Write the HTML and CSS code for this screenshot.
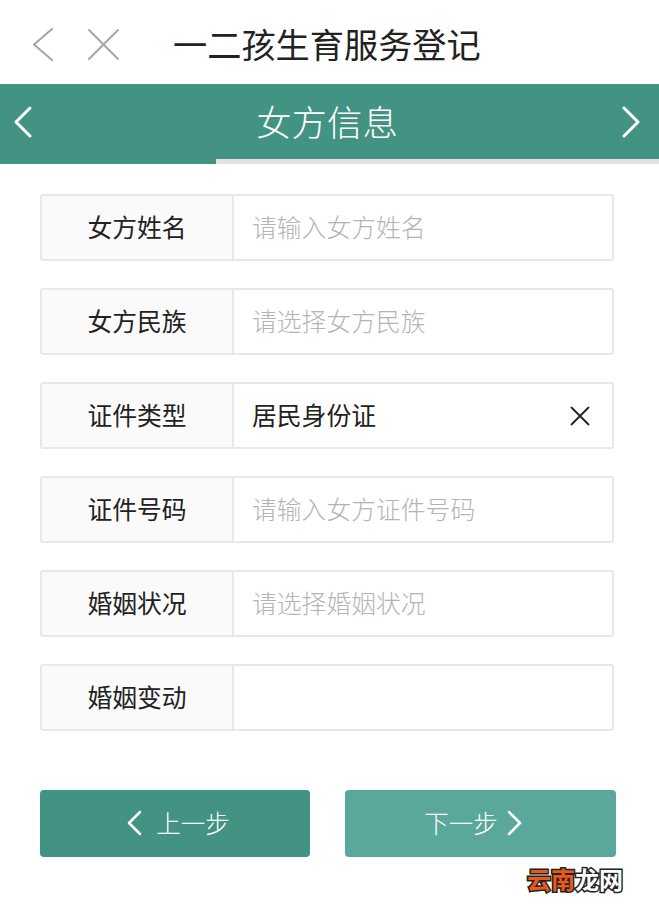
FILE: index.html
```html
<!DOCTYPE html>
<html lang="zh-CN">

<head>
  <meta charset="UTF-8">
  <meta name="viewport" content="width=device-width, initial-scale=1.0">
  <title>一二孩生育服务登记</title>
  <link rel="stylesheet" href="styles.css">
</head>

<body>
  <div id="container">
    <!-- 顶部导航 -->
    <div class="nav-bar">
      <svg class="nav-back" width="24" height="36" viewBox="0 0 24 36"><path d="M20 2 L2 17.5 L20 33"/></svg>
      <svg class="nav-close" width="34" height="34" viewBox="0 0 34 34"><path d="M2 2 L31 31 M31 2 L2 31"/></svg>
      <div class="nav-title">一二孩生育服务登记</div>
    </div>

    <!-- 步骤标题 -->
    <div class="step-bar">
      <svg class="step-arrow" width="20" height="32" viewBox="0 0 20 32"><path d="M17 2 L3 16 L17 30"/></svg>
      <div class="step-title">女方信息</div>
      <svg class="step-arrow" width="20" height="32" viewBox="0 0 20 32"><path d="M3 2 L17 16 L3 30"/></svg>
    </div>
    <div class="progress">
      <div class="progress-fill"></div>
    </div>

    <!-- 表单 -->
    <div class="form">
      <div class="form-row">
        <div class="form-label">女方姓名</div>
        <div class="form-value placeholder">请输入女方姓名</div>
      </div>
      <div class="form-row">
        <div class="form-label">女方民族</div>
        <div class="form-value placeholder">请选择女方民族</div>
      </div>
      <div class="form-row">
        <div class="form-label">证件类型</div>
        <div class="form-value">居民身份证</div>
        <svg class="clear-icon" width="20" height="20" viewBox="0 0 20 20"><path d="M1.5 1.5 L18.5 18.5 M18.5 1.5 L1.5 18.5"/></svg>
      </div>
      <div class="form-row">
        <div class="form-label">证件号码</div>
        <div class="form-value placeholder">请输入女方证件号码</div>
      </div>
      <div class="form-row">
        <div class="form-label">婚姻状况</div>
        <div class="form-value placeholder">请选择婚姻状况</div>
      </div>
      <div class="form-row">
        <div class="form-label">婚姻变动</div>
        <div class="form-value"></div>
      </div>
    </div>

    <!-- 按钮 -->
    <div class="button-list">
      <div class="button button-prev">
        <svg class="button-arrow" width="16" height="26" viewBox="0 0 16 26"><path d="M14 2 L3 13 L14 24"/></svg>
        <span>上一步</span>
      </div>
      <div class="button button-next">
        <span>下一步</span>
        <svg class="button-arrow" width="16" height="26" viewBox="0 0 16 26"><path d="M2 2 L13 13 L2 24"/></svg>
      </div>
    </div>
  </div>

  <!-- 水印 -->
  <div class="watermark"><span class="watermark-red">云南</span><span class="watermark-white">龙网</span></div>
</body>

</html>
```

FILE: styles.css
```css
body {
  margin: 0;
  padding: 0;
  font-family: "Noto Sans CJK SC", "Liberation Sans", sans-serif;
  background-color: #fff;
  color: #222;
}

#container {
  display: flex;
  flex-direction: column;
  min-height: 100vh;
}

svg path {
  fill: none;
  stroke-linecap: round;
  stroke-linejoin: round;
}

.nav-bar {
  display: flex;
  align-items: center;
  height: 84px;
  padding-left: 32px;
  box-sizing: border-box;
}

.nav-back path,
.nav-close path {
  stroke: #a6a6a6;
  stroke-width: 2;
}

.nav-back {
  margin-top: 5px;
}

.nav-close {
  margin-left: 31px;
  margin-top: 6px;
}

.nav-title {
  margin-left: 52px;
  margin-top: 2px;
  font-size: 34.2px;
  line-height: 40px;
  color: #222;
  white-space: nowrap;
}

.step-bar {
  display: flex;
  justify-content: space-between;
  align-items: center;
  height: 75px;
  padding: 0 18px 0 13px;
  background-color: #429384;
  color: #fff;
}

.step-arrow path {
  stroke: #fff;
  stroke-width: 3;
}

.step-title {
  font-size: 35.4px;
  font-weight: 300;
  line-height: 40px;
  margin-bottom: 2px;
}

.progress {
  height: 5px;
  background-color: #e2e2e2;
}

.progress-fill {
  width: 216px;
  height: 100%;
  background-color: #429384;
}

.form {
  display: flex;
  flex-direction: column;
  gap: 27px;
  width: 574px;
  margin: 30px 0 0 40px;
}

.form-row {
  display: flex;
  align-items: stretch;
  height: 67px;
  box-sizing: border-box;
  border: 2px solid #e8e8e8;
  border-radius: 3px;
}

.form-label {
  display: flex;
  align-items: center;
  justify-content: center;
  width: 190px;
  padding-bottom: 4px;
  background-color: #fafafa;
  border-right: 2px solid #e8e8e8;
  font-size: 24.8px;
  color: #222;
}

.form-value {
  display: flex;
  align-items: center;
  flex: 1;
  padding-left: 18px;
  padding-bottom: 4px;
  font-size: 24.8px;
  color: #222;
}

.placeholder {
  color: #b4b4b4;
  font-weight: 300;
}

.clear-icon {
  align-self: center;
  margin-right: 22px;
}

.clear-icon path {
  stroke: #222;
  stroke-width: 1.8;
}

.button-list {
  display: flex;
  gap: 35px;
  margin: 59px 0 0 40px;
}

.button {
  display: flex;
  align-items: center;
  justify-content: center;
  height: 67px;
  padding-bottom: 2px;
  box-sizing: border-box;
  border-radius: 4px;
  color: #fff;
  font-size: 24.5px;
  font-weight: 300;
  cursor: pointer;
}

.button-prev {
  gap: 14px;
  width: 270px;
  padding-left: 6px;
  background-color: #429384;
}

.button-next {
  gap: 9px;
  width: 271px;
  padding-right: 14px;
  background-color: #5aa89c;
}

.button-arrow path {
  stroke: #fff;
  stroke-width: 2.5;
}

.watermark {
  position: absolute;
  left: 527px;
  top: 864px;
  font-size: 24px;
  font-weight: 700;
  line-height: 30px;
  white-space: nowrap;
  -webkit-text-stroke: 3px #222;
  paint-order: stroke;
}

.watermark-red {
  color: #e8591a;
}

.watermark-white {
  color: #fff;
}
```
